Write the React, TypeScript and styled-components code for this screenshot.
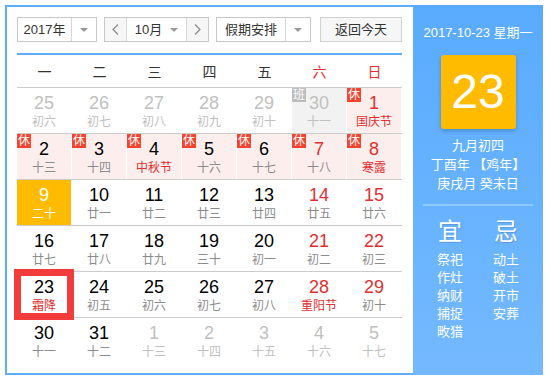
import React from "react";
import styled, { createGlobalStyle, css } from "styled-components";

const FONT = `"Liberation Sans", Arial, "Noto Sans CJK SC", sans-serif`;

const GlobalStyle = createGlobalStyle`
  body {
    margin: 0;
    padding: 5px;
    background: #ffffff;
    font-family: ${FONT};
  }
`;

const Wrapper = styled.div`
  display: flex;
  width: 538px;
  height: 370px;
`;

const Main = styled.div`
  box-sizing: border-box;
  width: 408px;
  height: 100%;
  border: 2px solid #5eacff;
  border-right: none;
  padding: 10px 11px 0 10px;
`;

const Toolbar = styled.div`
  display: flex;
  height: 25px;
  padding-bottom: 11px;
  border-bottom: 2px solid #5eacff;
`;

const Select = styled.div<{ $width: number; $gap: number }>`
  box-sizing: border-box;
  display: flex;
  width: ${p => p.$width}px;
  margin-right: ${p => p.$gap}px;
  height: 25px;
  border: 1px solid #c8c8c8;
  background: #ffffff;
  font-size: 13px;
  color: #333;
`;

const SelectText = styled.div`
  flex: 1;
  display: flex;
  align-items: center;
  justify-content: center;
  gap: 8px;
  line-height: 23px;
`;

const SelectArrow = styled.div`
  width: 24px;
  border-left: 1px solid #d6d6d6;
  display: flex;
  align-items: center;
  justify-content: center;
`;

const Caret = styled.span`
  width: 0;
  height: 0;
  border-left: 4px solid transparent;
  border-right: 4px solid transparent;
  border-top: 4px solid #999;
`;

const NavButton = styled.div<{ $side: "left" | "right" }>`
  width: 21px;
  background: #f6f6f6;
  display: flex;
  align-items: center;
  justify-content: center;
  ${p =>
    p.$side === "left"
      ? css`border-right: 1px solid #d6d6d6;`
      : css`border-left: 1px solid #d6d6d6;`}
`;

const TodayButton = styled.div`
  box-sizing: border-box;
  width: 82px;
  height: 25px;
  margin-left: auto;
  border: 1px solid #d0d0d0;
  background: #f6f6f6;
  font-size: 13px;
  color: #333;
  text-align: center;
  line-height: 23px;
`;

const WeekHeader = styled.div`
  display: grid;
  grid-template-columns: repeat(7, 55px);
  height: 32px;
  align-items: center;
`;

const WeekDay = styled.div<{ $red?: boolean }>`
  text-align: center;
  font-size: 14px;
  color: ${p => (p.$red ? "#e02f2f" : "#333")};
`;

const Row = styled.div`
  display: grid;
  grid-template-columns: repeat(7, 54px);
  column-gap: 1px;
  border-top: 1px solid #cccccc;
  height: 45px;
`;

type Kind = "normal" | "other" | "rest" | "work" | "today";

const cellBg: Record<Kind, string> = {
  normal: "transparent",
  other: "transparent",
  rest: "#fdeeee",
  work: "#f2f2f2",
  today: "#ffbb00",
};

const Cell = styled.div<{ $kind: Kind; $selected?: boolean }>`
  position: relative;
  background: ${p => cellBg[p.$kind]};
  text-align: center;
  padding-top: 4px;
  box-sizing: border-box;
  ${p =>
    p.$selected &&
    css`
      outline: 7px solid #f23b3b;
      outline-offset: -4px;
      z-index: 1;
    `}
`;

const DayNum = styled.div<{ $color: string }>`
  font-size: 18px;
  line-height: 22px;
  color: ${p => p.$color};
`;

const Lunar = styled.div<{ $color: string }>`
  font-size: 12px;
  line-height: 17px;
  color: ${p => p.$color};
`;

const Badge = styled.span<{ $work?: boolean }>`
  position: absolute;
  left: 0;
  top: 0;
  width: 14px;
  height: 14px;
  background: ${p => (p.$work ? "#bcbcbc" : "#f5432f")};
  color: #fff;
  font-size: 12px;
  line-height: 14px;
  text-align: center;
`;

const Side = styled.div`
  width: 130px;
  height: 100%;
  background: linear-gradient(#59abff, #74b9ff);
  color: #fff;
  display: flex;
  flex-direction: column;
  align-items: center;
  padding-top: 19px;
  box-sizing: border-box;
`;

const SideDate = styled.div`
  font-size: 13px;
  line-height: 18px;
`;

const BigDay = styled.div`
  margin-top: 13px;
  width: 75px;
  height: 74px;
  border-radius: 3px;
  background: #ffbb00;
  box-shadow: 0 2px 4px rgba(0, 0, 0, 0.2);
  font-size: 48px;
  line-height: 74px;
  text-align: center;
`;

const LunarInfo = styled.div`
  margin-top: 7px;
  font-size: 13px;
  line-height: 19px;
  text-align: center;
`;

const Divider = styled.div`
  margin-top: 11px;
  width: 110px;
  height: 2px;
  background: #8ec8ff;
`;

const Almanac = styled.div`
  margin-top: 12px;
  display: grid;
  grid-template-columns: 50px 50px;
  column-gap: 6px;
`;

const AlmanacCol = styled.div`
  display: flex;
  flex-direction: column;
  align-items: center;
`;

const AlmanacTitle = styled.div`
  font-size: 24px;
  line-height: 28px;
  margin-bottom: 5px;
  text-shadow: 1px 1px 1px rgba(0, 0, 0, 0.15);
`;

const AlmanacItem = styled.div`
  font-size: 13px;
  line-height: 18px;
`;

const Chevron: React.FC<{ dir: "left" | "right" }> = ({ dir }) => (
  <svg width="7" height="11" viewBox="0 0 7 11">
    <polyline
      points={dir === "left" ? "6,0.5 1,5.5 6,10.5" : "1,0.5 6,5.5 1,10.5"}
      fill="none"
      stroke="#888"
      strokeWidth="1.2"
    />
  </svg>
);

type Day = {
  n: number;
  l: string;
  kind?: Kind;
  red?: boolean;
  fest?: boolean;
  badge?: "休" | "班";
  selected?: boolean;
};

const rows: Day[][] = [
  [
    { n: 25, l: "初六", kind: "other" },
    { n: 26, l: "初七", kind: "other" },
    { n: 27, l: "初八", kind: "other" },
    { n: 28, l: "初九", kind: "other" },
    { n: 29, l: "初十", kind: "other" },
    { n: 30, l: "十一", kind: "work", badge: "班" },
    { n: 1, l: "国庆节", kind: "rest", badge: "休", red: true, fest: true },
  ],
  [
    { n: 2, l: "十三", kind: "rest", badge: "休" },
    { n: 3, l: "十四", kind: "rest", badge: "休" },
    { n: 4, l: "中秋节", kind: "rest", badge: "休", fest: true },
    { n: 5, l: "十六", kind: "rest", badge: "休" },
    { n: 6, l: "十七", kind: "rest", badge: "休" },
    { n: 7, l: "十八", kind: "rest", badge: "休", red: true },
    { n: 8, l: "寒露", kind: "rest", badge: "休", red: true, fest: true },
  ],
  [
    { n: 9, l: "二十", kind: "today" },
    { n: 10, l: "廿一" },
    { n: 11, l: "廿二" },
    { n: 12, l: "廿三" },
    { n: 13, l: "廿四" },
    { n: 14, l: "廿五", red: true },
    { n: 15, l: "廿六", red: true },
  ],
  [
    { n: 16, l: "廿七" },
    { n: 17, l: "廿八" },
    { n: 18, l: "廿九" },
    { n: 19, l: "三十" },
    { n: 20, l: "初一" },
    { n: 21, l: "初二", red: true },
    { n: 22, l: "初三", red: true },
  ],
  [
    { n: 23, l: "霜降", fest: true, selected: true },
    { n: 24, l: "初五" },
    { n: 25, l: "初六" },
    { n: 26, l: "初七" },
    { n: 27, l: "初八" },
    { n: 28, l: "重阳节", red: true, fest: true },
    { n: 29, l: "初十", red: true },
  ],
  [
    { n: 30, l: "十一" },
    { n: 31, l: "十二" },
    { n: 1, l: "十三", kind: "other" },
    { n: 2, l: "十四", kind: "other" },
    { n: 3, l: "十五", kind: "other" },
    { n: 4, l: "十六", kind: "other" },
    { n: 5, l: "十七", kind: "other" },
  ],
];

const weekDays = ["一", "二", "三", "四", "五", "六", "日"];

const numColor = (d: Day) => {
  const kind = d.kind ?? "normal";
  if (kind === "today") return "#ffffff";
  if (kind === "other" || kind === "work") return "#c0c0c0";
  return d.red ? "#e02f2f" : "#000000";
};

const lunarColor = (d: Day) => {
  const kind = d.kind ?? "normal";
  if (kind === "today") return "#ffffff";
  if (kind === "other" || kind === "work") return "#c0c0c0";
  return d.fest ? "#e02f2f" : "#8c8c8c";
};

const App: React.FC = () => {
  return (
    <>
      <GlobalStyle />
      <Wrapper>
        <Main>
          <Toolbar>
            <Select $width={80} $gap={7}>
              <SelectText>2017年</SelectText>
              <SelectArrow>
                <Caret />
              </SelectArrow>
            </Select>
            <Select $width={105} $gap={7}>
              <NavButton $side="left">
                <Chevron dir="left" />
              </NavButton>
              <SelectText>
                10月
                <Caret />
              </SelectText>
              <NavButton $side="right">
                <Chevron dir="right" />
              </NavButton>
            </Select>
            <Select $width={95} $gap={0}>
              <SelectText>假期安排</SelectText>
              <SelectArrow>
                <Caret />
              </SelectArrow>
            </Select>
            <TodayButton>返回今天</TodayButton>
          </Toolbar>
          <WeekHeader>
            {weekDays.map((w, i) => (
              <WeekDay key={w} $red={i >= 5}>
                {w}
              </WeekDay>
            ))}
          </WeekHeader>
          {rows.map((row, ri) => (
            <Row key={ri}>
              {row.map((d, ci) => (
                <Cell key={ci} $kind={d.kind ?? "normal"} $selected={d.selected}>
                  {d.badge && <Badge $work={d.badge === "班"}>{d.badge}</Badge>}
                  <DayNum $color={numColor(d)}>{d.n}</DayNum>
                  <Lunar $color={lunarColor(d)}>{d.l}</Lunar>
                </Cell>
              ))}
            </Row>
          ))}
        </Main>
        <Side>
          <SideDate>2017-10-23 星期一</SideDate>
          <BigDay>23</BigDay>
          <LunarInfo>
            九月初四
            <br />
            丁酉年 【鸡年】
            <br />
            庚戌月 癸未日
          </LunarInfo>
          <Divider />
          <Almanac>
            <AlmanacCol>
              <AlmanacTitle>宜</AlmanacTitle>
              {["祭祀", "作灶", "纳财", "捕捉", "畋猎"].map(t => (
                <AlmanacItem key={t}>{t}</AlmanacItem>
              ))}
            </AlmanacCol>
            <AlmanacCol>
              <AlmanacTitle>忌</AlmanacTitle>
              {["动土", "破土", "开市", "安葬"].map(t => (
                <AlmanacItem key={t}>{t}</AlmanacItem>
              ))}
            </AlmanacCol>
          </Almanac>
        </Side>
      </Wrapper>
    </>
  );
};

export default App;
